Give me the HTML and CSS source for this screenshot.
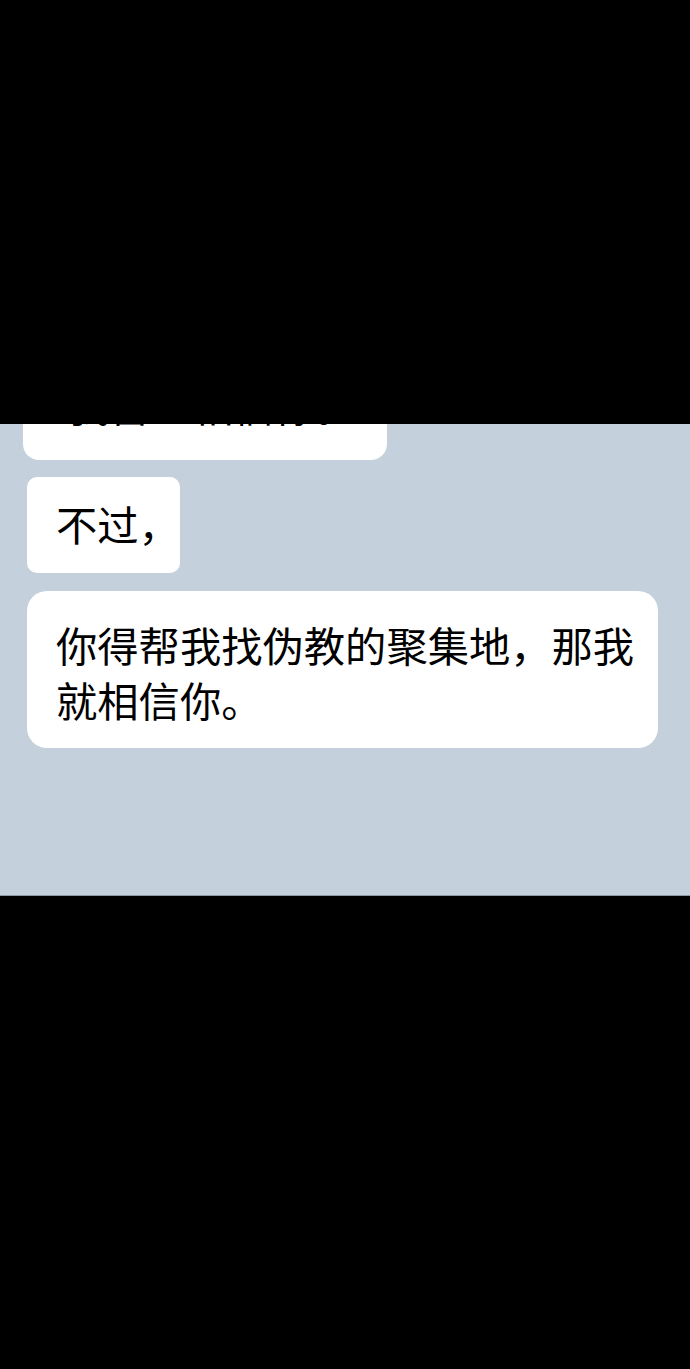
FILE: index.html
```html
<!DOCTYPE html>
<html lang="zh-CN">
<head>
    <meta charset="UTF-8">
    <meta name="viewport" content="width=device-width, initial-scale=1.0">
    <link rel="stylesheet" href="styles.css">
    <title>聊天</title>
</head>
<body>

<div class="chat">
    <div class="bubble first">我暂且相信你。</div>
    <div class="bubble short">不过，</div>
    <div class="bubble long">你得帮我找伪教的聚集地，那我就相信你。</div>
</div>

</body>
</html>
```

FILE: styles.css
```css
body {
    margin: 0;
    background: #000;
    font-family: "Noto Sans CJK SC", "Noto Sans", sans-serif;
    min-height: 1369px;
}

.chat {
    margin-top: 424px;
    height: 471px;
    overflow: hidden;
    background: #c4d1dc;
    border-bottom: 1px solid #8f99a1;
    padding: 0 32px 0 27px;
    display: flex;
    flex-direction: column;
    align-items: flex-start;
}

.bubble {
    background: #fff;
    color: #000;
    font-size: 41.3px;
    line-height: 55px;
    border-radius: 20px;
    max-width: 100%;
    box-sizing: border-box;
}

.first {
    margin-top: -47px;
    margin-left: -4px;
    width: 364px;
    padding: 0 8px 28px 45px;
    white-space: nowrap;
    border-radius: 16px;
}

.short {
    margin-top: 17px;
    padding: 19px 0 22px 29px;
    border-radius: 10px;
}

.long {
    margin-top: 18px;
    width: 100%;
    padding: 26px 20px 21px 29px;
}
```
